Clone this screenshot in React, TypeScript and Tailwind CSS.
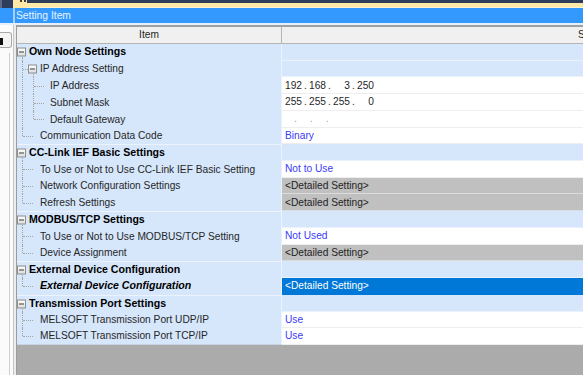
import React from "react"

type Kind = "cat" | "l1box" | "l1" | "l2"
type ValueType = "band" | "ip" | "gateway" | "blue" | "detail" | "selected"

interface RowData {
  label: string
  kind: Kind
  last?: boolean
  italic?: boolean
  value?: string
  type: ValueType
}

const rows: RowData[] = [
  { label: "Own Node Settings", kind: "cat", type: "band" },
  { label: "IP Address Setting", kind: "l1box", type: "band" },
  { label: "IP Address", kind: "l2", type: "ip", value: "192.168.3.250" },
  { label: "Subnet Mask", kind: "l2", type: "ip", value: "255.255.255.0" },
  { label: "Default Gateway", kind: "l2", last: true, type: "gateway" },
  { label: "Communication Data Code", kind: "l1", last: true, type: "blue", value: "Binary" },
  { label: "CC-Link IEF Basic Settings", kind: "cat", type: "band" },
  { label: "To Use or Not to Use CC-Link IEF Basic Setting", kind: "l1", type: "blue", value: "Not to Use" },
  { label: "Network Configuration Settings", kind: "l1", type: "detail" },
  { label: "Refresh Settings", kind: "l1", last: true, type: "detail" },
  { label: "MODBUS/TCP Settings", kind: "cat", type: "band" },
  { label: "To Use or Not to Use MODBUS/TCP Setting", kind: "l1", type: "blue", value: "Not Used" },
  { label: "Device Assignment", kind: "l1", last: true, type: "detail" },
  { label: "External Device Configuration", kind: "cat", type: "band" },
  { label: "External Device Configuration", kind: "l1", last: true, italic: true, type: "selected" },
  { label: "Transmission Port Settings", kind: "cat", type: "band" },
  { label: "MELSOFT Transmission Port UDP/IP", kind: "l1", type: "blue", value: "Use" },
  { label: "MELSOFT Transmission Port TCP/IP", kind: "l1", last: true, type: "blue", value: "Use" },
]

const font = { fontFamily: '"Liberation Sans", Arial, sans-serif' }

function MinusBox({ className }: { className: string }) {
  return (
    <span
      className={`absolute top-1/2 -translate-y-1/2 w-[9px] h-[9px] border border-[#8e8f8f] bg-gradient-to-b from-white to-[#dcdcdc] flex items-center justify-center ${className}`}
    >
      <span className="w-[5px] h-px bg-[#3c3c3c]" />
    </span>
  )
}

function TreeCell({ row }: { row: RowData }) {
  const dot = "border-[#a3a3a3] border-dotted"
  if (row.kind === "cat") {
    return (
      <div className="relative h-full flex items-center pl-[12px] font-bold text-[10.6px] text-black">
        <MinusBox className="left-0" />
        <span className={`absolute left-[5px] top-[13px] bottom-0 border-l ${dot}`} />
        {row.label}
      </div>
    )
  }
  if (row.kind === "l1box") {
    return (
      <div className="relative h-full flex items-center pl-[23px] text-[10.2px] text-[#262626]">
        <span className={`absolute left-[5px] top-0 bottom-0 border-l ${dot}`} />
        <span className={`absolute left-[6px] w-[5px] top-1/2 border-t ${dot}`} />
        <MinusBox className="left-[11px]" />
        <span className={`absolute left-[16px] top-[13px] bottom-0 border-l ${dot}`} />
        {row.label}
      </div>
    )
  }
  if (row.kind === "l1") {
    return (
      <div
        className={`relative h-full flex items-center pl-[23px] ${
          row.italic ? "font-bold italic text-[10.6px] text-black" : "text-[10.2px] text-[#262626]"
        }`}
      >
        <span className={`absolute left-[5px] top-0 border-l ${dot} ${row.last ? "h-1/2" : "bottom-0"}`} />
        <span className={`absolute left-[6px] w-[10px] top-1/2 border-t ${dot}`} />
        {row.label}
      </div>
    )
  }
  return (
    <div className="relative h-full flex items-center pl-[33px] text-[10.2px] text-[#262626]">
      <span className={`absolute left-[5px] top-0 bottom-0 border-l ${dot}`} />
      <span className={`absolute left-[16px] top-0 border-l ${dot} ${row.last ? "h-1/2" : "bottom-0"}`} />
      <span className={`absolute left-[17px] w-[10px] top-1/2 border-t ${dot}`} />
      {row.label}
    </div>
  )
}

function ValueCell({ row }: { row: RowData }) {
  const base = "h-full flex items-center pl-[3px] text-[10.2px] border-b"
  switch (row.type) {
    case "band":
      return <div className={`${base} bg-[#d6e7fc] border-[#e9f2fd]`} />
    case "ip": {
      const parts = (row.value || "").split(".")
      return (
        <div className={`${base} bg-white border-[#eeeeee] text-[#1f1f1f]`}>
          {parts.map((p, i) => (
            <React.Fragment key={i}>
              <span className="w-[17px] text-right">{p}</span>
              {i < 3 && <span className="w-[7px] text-center">.</span>}
            </React.Fragment>
          ))}
        </div>
      )
    }
    case "gateway":
      return (
        <div className={`${base} bg-white border-[#eeeeee] text-[#8f9ad8]`}>
          <span className="ml-[9px]">.</span>
          <span className="ml-[13px]">.</span>
          <span className="ml-[13px]">.</span>
        </div>
      )
    case "blue":
      return <div className={`${base} bg-white border-[#eeeeee] text-[#3b3bf5]`}>{row.value}</div>
    case "detail":
      return <div className={`${base} bg-[#c0c0c0] border-[#dcdcdc] text-[#1f1f1f]`}>&lt;Detailed Setting&gt;</div>
    case "selected":
      return <div className={`${base} bg-[#0078d7] border-[#0078d7] text-white`}>&lt;Detailed Setting&gt;</div>
  }
}

export default function App() {
  return (
    <div className="w-[583px] h-[375px] overflow-hidden flex flex-col bg-white" style={font}>
      {/* top strip */}
      <div className="h-[8px] flex shrink-0">
        <div className="w-[13px] bg-[#2e3d5b] border-l-2 border-[#5a6a88]" />
        <div className="w-[14px] bg-[#fde8a8] relative">
          <span className="absolute left-[7px] top-0 w-[2px] h-[2px] bg-[#3b3b3b]" />
          <span className="absolute left-[11px] top-0 w-[2px] h-[2px] bg-[#3b3b3b]" />
        </div>
        <div className="flex-1 flex flex-col">
          <div className="h-[3px] bg-[#2e3d5b]" />
          <div className="h-[4px] bg-[#fde8a8]" />
          <div className="h-px bg-[#fdf3d2]" />
        </div>
      </div>

      {/* title bar */}
      <div className="h-[15px] flex shrink-0 bg-[#3399ff]">
        <div className="w-[13px]" />
        <div className="w-[2px] bg-[#a8d0fb]" />
        <div className="flex-1 flex items-center pl-px text-[10.3px] text-[#e8f3ff]">Setting Item</div>
      </div>
      <div className="h-[2px] shrink-0 bg-[#e6f0fb]" />

      <div className="flex-1 flex min-h-0">
        {/* left tool strip */}
        <div className="w-[13px] shrink-0 bg-[#fbfbfb] relative">
          <div className="absolute left-0 top-[7px] w-[12px] h-[16px] border border-l-0 border-[#a9a9a9] rounded-r-[3px] bg-[#f4f4f4]">
            <span className="absolute left-0 top-[5px] w-[3px] h-[7px] bg-[#111]" />
          </div>
          <div className="absolute left-[9px] top-[28px] bottom-0 border-l border-[#d0d0d0]" />
        </div>
        <div className="w-[3px] shrink-0 bg-[#ececec] border-l border-[#c6c6c6]" />

        {/* property grid */}
        <div className="flex-1 flex flex-col min-w-0 border-l border-[#9b9b9b] bg-[#ababab]">
          <div className="h-[2px] shrink-0 bg-[#a0a0a0]" />
          <div className="h-[17px] shrink-0 flex bg-[#f0f0f0] border-b border-[#b4b4b4] text-[10.2px] text-[#1e1e1e]">
            <div className="w-[265px] shrink-0 flex items-center justify-center border-r border-[#b4b4b4]">Item</div>
            <div className="flex-1 flex items-center pl-[296px] whitespace-nowrap">Setting</div>
          </div>
          <div className="flex flex-col">
            {rows.map((row, i) => (
              <div key={i} className="h-[16.72px] flex whitespace-nowrap">
                <div
                  className={`w-[265px] shrink-0 bg-[#d6e7fc] border-r border-[#eaf2fd] ${
                    row.kind === "cat" && i > 0 ? "border-t border-t-[#ecf3fd]" : ""
                  } ${i === rows.length - 1 ? "border-b border-b-[#c7d3e2]" : ""}`}
                >
                  <TreeCell row={row} />
                </div>
                <div className="flex-1 min-w-0">
                  <ValueCell row={row} />
                </div>
              </div>
            ))}
          </div>
        </div>
      </div>
    </div>
  )
}
